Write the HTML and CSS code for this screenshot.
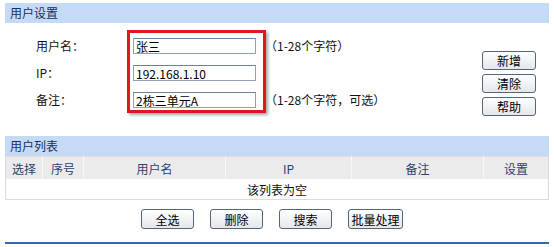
FILE: index.html
```html
<!DOCTYPE html>
<html lang="zh-CN">
<head>
    <meta charset="UTF-8">
    <title>用户设置</title>
    <link rel="stylesheet" href="styles.css">
</head>
<body>
    <div class="panel">
        <div class="bar">用户设置</div>
        <div class="form">
            <div class="labels">
                <div class="row">用户名：</div>
                <div class="row">IP：</div>
                <div class="row">备注：</div>
            </div>
            <div class="mark">
                <input class="field" type="text" value="张三">
                <input class="field" type="text" value="192.168.1.10">
                <input class="field" type="text" value="2栋三单元A">
            </div>
            <div class="hints">
                <div class="row">（1-28个字符）</div>
                <div class="row"></div>
                <div class="row">（1-28个字符，可选）</div>
            </div>
            <div class="side-buttons">
                <button class="btn">新增</button>
                <button class="btn">清除</button>
                <button class="btn">帮助</button>
            </div>
        </div>

        <div class="bar">用户列表</div>
        <table class="list">
            <tr>
                <th class="c-sel">选择</th>
                <th class="c-no">序号</th>
                <th class="c-name">用户名</th>
                <th class="c-ip">IP</th>
                <th class="c-note">备注</th>
                <th class="c-set">设置</th>
            </tr>
            <tr>
                <td colspan="6" class="empty">该列表为空</td>
            </tr>
        </table>

        <div class="actions">
            <button class="btn">全选</button>
            <button class="btn">删除</button>
            <button class="btn">搜索</button>
            <button class="btn btn-wide">批量处理</button>
        </div>
        <div class="bottom-line"></div>
    </div>
</body>
</html>
```

FILE: styles.css
```css
body {
    margin: 0;
    background: #fff;
    font-family: "Noto Sans CJK SC", "DejaVu Sans", sans-serif;
    font-size: 12px;
    color: #111;
}
.panel {
    width: 544px;
    margin-left: 5px;
    padding-top: 3px;
}
.bar {
    height: 20px;
    line-height: 20px;
    padding-left: 5px;
    background: #c4daf5;
    color: #1e2f58;
}
.form {
    height: 113px;
    box-sizing: border-box;
    padding-top: 7px;
    display: flex;
    align-items: flex-start;
}
.labels {
    width: 91px;
    padding-left: 31px;
    padding-top: 8px;
    display: flex;
    flex-direction: column;
    gap: 11px;
}
.row {
    height: 16px;
    line-height: 16px;
}
.mark {
    border: 3px solid #e11620;
    padding: 5px 7px 2px 3px;
    display: flex;
    flex-direction: column;
    gap: 11px;
    box-shadow: 2px 2px 3px rgba(0,0,0,0.35);
}
.field {
    width: 123px;
    height: 16px;
    box-sizing: border-box;
    margin: 0;
    padding: 0 2px;
    border: 1px solid #8fa1b5;
    border-top-color: #6f8196;
    font-family: "Noto Sans CJK SC", sans-serif;
    font-size: 12px;
    line-height: 14px;
    color: #000;
    background: #fff;
}
.hints {
    padding-top: 8px;
    margin-left: -1px;
    display: flex;
    flex-direction: column;
    gap: 11px;
}
.side-buttons {
    margin-left: auto;
    margin-right: 13px;
    padding-top: 21px;
    display: flex;
    flex-direction: column;
    gap: 4px;
}
.btn {
    width: 54px;
    height: 19px;
    padding: 0;
    border: 1px solid #55667a;
    border-radius: 3px;
    background: linear-gradient(#ffffff, #e4e6e9);
    font-family: "Noto Sans CJK SC", sans-serif;
    font-size: 12px;
    line-height: 17px;
    color: #000;
}
.list {
    width: 544px;
    border-collapse: collapse;
    border: 1px solid #dcdcdc;
}
.list th {
    height: 22px;
    padding: 0;
    background: #ebebeb;
    border-right: 1px solid #f7f7f7;
    font-weight: normal;
    color: #2e3f6b;
}
.list th:last-child {
    border-right: none;
}
.c-sel { width: 36px; }
.c-no { width: 40px; }
.c-name { width: 141px; }
.c-ip { width: 125px; }
.c-note { width: 131px; }
.empty {
    height: 20px;
    padding: 0;
    text-align: center;
    background: #fff;
}
.actions {
    display: flex;
    gap: 16px;
    padding-left: 136px;
    padding-top: 9px;
}
.actions .btn {
    width: 53px;
    height: 20px;
}
.actions .btn-wide {
    width: 55px;
}
.bottom-line {
    margin-top: 13px;
    height: 2px;
    background: #2e6ca6;
}
```
